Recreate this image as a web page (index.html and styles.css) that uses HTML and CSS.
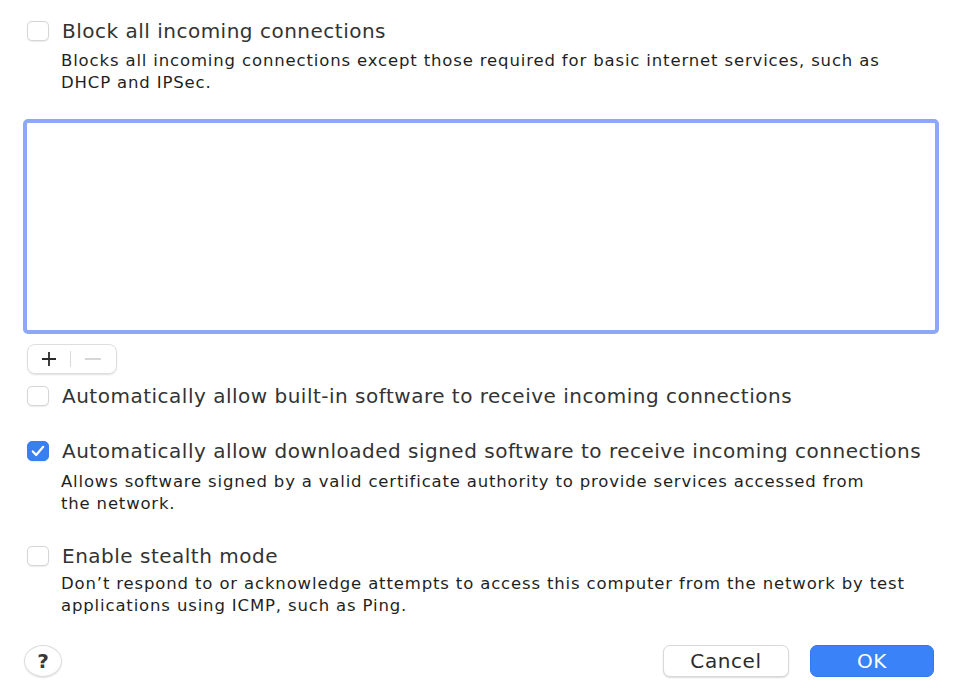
FILE: index.html
```html
<!DOCTYPE html>
<html>
<head>
<meta charset="utf-8">
<link rel="stylesheet" href="styles.css">
</head>
<body>
<div class="sheet">
  <div class="option first">
    <div class="row">
      <span class="box"></span>
      <span class="label">Block all incoming connections</span>
    </div>
    <p class="desc">Blocks all incoming connections except those required for basic internet services, such as<br>DHCP and IPSec.</p>
  </div>

  <div class="list"></div>

  <div class="segmented">
    <span class="seg plus">
      <svg width="16" height="16" viewBox="0 0 16 16"><path d="M8 1v14M1 8h14" stroke="#2a2a2a" stroke-width="1.8" fill="none"/></svg>
    </span>
    <span class="divider"></span>
    <span class="seg minus">
      <svg width="18" height="16" viewBox="0 0 18 16"><path d="M1 8h16" stroke="#c4c4c4" stroke-width="1.4" fill="none"/></svg>
    </span>
  </div>

  <div class="option second">
    <div class="row">
      <span class="box"></span>
      <span class="label">Automatically allow built-in software to receive incoming connections</span>
    </div>
  </div>

  <div class="option third">
    <div class="row">
      <span class="box checked">
        <svg width="14" height="12" viewBox="0 0 14 12"><path d="M1.8 6.4l3.4 3.6L12.2 1.8" stroke="#fff" stroke-width="2.2" fill="none" stroke-linecap="round" stroke-linejoin="round"/></svg>
      </span>
      <span class="label">Automatically allow downloaded signed software to receive incoming connections</span>
    </div>
    <p class="desc">Allows software signed by a valid certificate authority to provide services accessed from<br>the network.</p>
  </div>

  <div class="option fourth">
    <div class="row">
      <span class="box"></span>
      <span class="label">Enable stealth mode</span>
    </div>
    <p class="desc">Don’t respond to or acknowledge attempts to access this computer from the network by test<br>applications using ICMP, such as Ping.</p>
  </div>

  <div class="footer">
    <span class="help">?</span>
    <div class="actions">
      <span class="btn cancel">Cancel</span>
      <span class="btn ok">OK</span>
    </div>
  </div>
</div>
</body>
</html>
```

FILE: styles.css
```css
html, body {
  margin: 0;
  padding: 0;
  background: #ffffff;
}
body {
  font-family: "DejaVu Sans", "Liberation Sans", sans-serif;
  width: 960px;
  height: 688px;
  overflow: hidden;
}
.sheet {
  display: flex;
  flex-direction: column;
  padding: 21px 21px 0 23px;
}
.option {
  display: flex;
  flex-direction: column;
  padding-left: 4px;
}
.row {
  display: flex;
  align-items: center;
  height: 20px;
}
.box {
  width: 20px;
  height: 18px;
  border: 1px solid #d6d6d6;
  border-radius: 5px;
  background: #fff;
  box-shadow: 0 0.5px 1px rgba(0,0,0,0.08);
  flex: none;
  display: flex;
  align-items: center;
  justify-content: center;
}
.box.checked {
  background: #3a7ff0;
  border-color: #3a7ff0;
}
.label {
  margin-left: 13px;
  font-size: 20px;
  letter-spacing: 0.5px;
  color: #333333;
  white-space: nowrap;
}
.desc {
  margin: 9px 0 0 34px;
  font-size: 16.5px;
  letter-spacing: 0.85px;
  line-height: 21.5px;
  color: #1f1f1f;
  white-space: nowrap;
}
.third .desc {
  margin-top: 10px;
  letter-spacing: 0.82px;
}
.fourth .desc {
  margin-top: 7px;
}
.list {
  margin-top: 26px;
  height: 207px;
  border: 4px solid #8ca8f7;
  border-radius: 5px;
  background: #fff;
}
.segmented {
  margin: 10px 0 0 4px;
  width: 88px;
  height: 28px;
  border: 1px solid #dedede;
  border-radius: 8px;
  box-shadow: 0 1px 1.5px rgba(0,0,0,0.12);
  display: flex;
  align-items: center;
}
.seg {
  display: flex;
  align-items: center;
  justify-content: center;
}
.plus {
  width: 42px;
}
.minus {
  width: 44px;
}
.divider {
  width: 1px;
  height: 16px;
  background: #d8d8d8;
}
.second {
  margin-top: 12px;
}
.third {
  margin-top: 35px;
}
.fourth {
  margin-top: 32px;
}
.footer {
  margin-top: 29px;
  display: flex;
  justify-content: space-between;
  align-items: center;
}
.help {
  margin-left: 1px;
  width: 36px;
  height: 30px;
  border: 1px solid #dcdcdc;
  border-radius: 50%;
  box-shadow: 0 1px 1.5px rgba(0,0,0,0.12);
  display: flex;
  align-items: center;
  justify-content: center;
  font-size: 20px;
  font-weight: bold;
  color: #383838;
}
.actions {
  display: flex;
  gap: 21px;
}
.btn {
  height: 30px;
  border-radius: 7px;
  display: flex;
  align-items: center;
  justify-content: center;
  font-size: 20px;
  letter-spacing: 0.6px;
}
.cancel {
  width: 124px;
  margin-left: 2px;
  border: 1px solid #d9d9d9;
  box-shadow: 0 1px 1.5px rgba(0,0,0,0.14);
  color: #2b2b2b;
  background: #fff;
}
.ok {
  width: 122px;
  margin-right: 5px;
  background: #3a82f7;
  color: #fff;
  border: 1px solid #3478f0;
}
```
